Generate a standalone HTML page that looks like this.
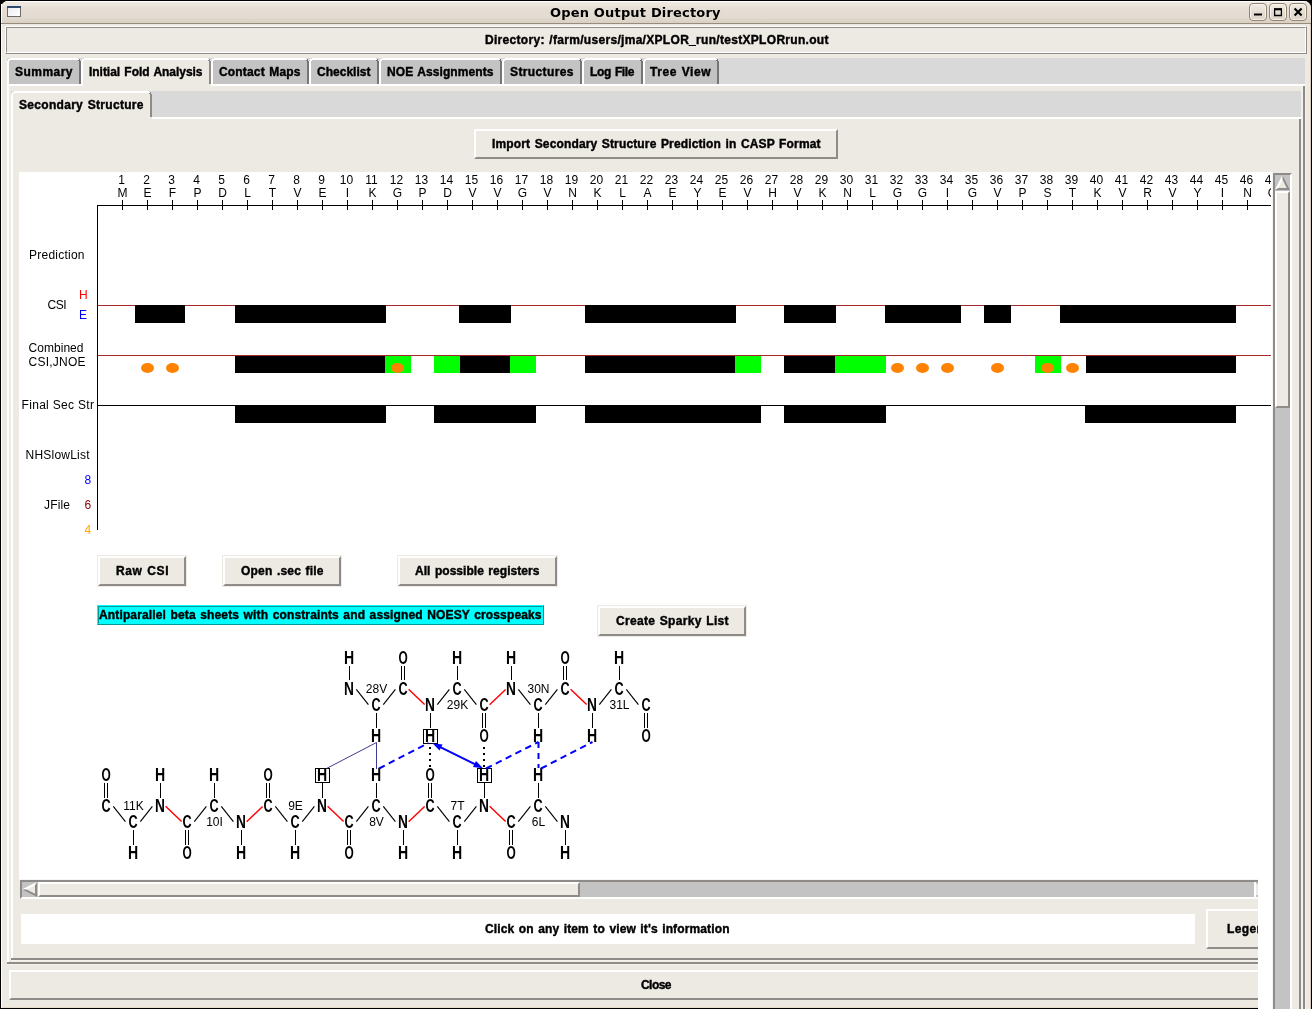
<!DOCTYPE html>
<html lang="en"><head><meta charset="utf-8"><title>Open Output Directory</title>
<style>
html,body{margin:0;padding:0;}
body{width:1312px;height:1009px;overflow:hidden;background:#ede9e3;position:relative;font:bold 12px 'Liberation Sans', sans-serif;}
div{position:absolute;box-sizing:content-box;}
#root{left:0;top:0;width:1312px;height:1009px;overflow:hidden;will-change:transform;}
.t{position:absolute;white-space:pre;display:block;color:#000;}
.fb{font:bold 12px/16px 'Liberation Sans',sans-serif;-webkit-text-stroke:0.4px #000;word-spacing:1px;}
.fr{font:12px/16px 'Liberation Sans',sans-serif;}
.ft{font:bold 13px/16px 'DejaVu Sans',sans-serif;}
svg text{font-weight:normal;}
svg .b text{font-weight:bold;}
svg{position:absolute;left:0;top:0;}
</style></head>
<body>
<div id="root">
<div class="winframe" style="left:0px;top:0px;width:1312px;height:1009px;background:#000;"></div><div style="left:1px;top:1px;width:1310px;height:1007px;background:#ede9e3;border-radius:7px 7px 0 0;"></div><div class="titlebar" style="left:1px;top:1px;width:1310px;height:23px;border-radius:7px 7px 0 0;background:linear-gradient(#ffffff 0,#ffffff 1px,#eeeae2 1px,#e6ded5 8px,#e3dad0 16px,#d9d1c5 22px,#998c7a 22px,#998c7a 23px);"></div><div style="left:1px;top:4px;width:1px;height:19px;background:#fff;"></div><div style="left:1px;top:24px;width:1px;height:984px;background:#fff;"></div><div style="left:7px;top:6px;width:12px;height:9px;border:1px solid #6b6b6b;background:linear-gradient(135deg,#ececec,#ffffff);"></div><div style="left:7px;top:6px;width:14px;height:2px;background:#2c4a6e;"></div><span class="t ft" style="left:550px;top:5px;letter-spacing:0.175px;">Open Output Directory</span><div style="left:1249px;top:3px;width:16px;height:16px;border:1px solid #93846f;border-radius:4px;box-shadow:inset 0 0 0 1px rgba(255,255,255,.65);background:linear-gradient(#efebe4,#e4dcd2 55%,#ddd5ca);"></div><div style="left:1269px;top:3px;width:16px;height:16px;border:1px solid #93846f;border-radius:4px;box-shadow:inset 0 0 0 1px rgba(255,255,255,.65);background:linear-gradient(#efebe4,#e4dcd2 55%,#ddd5ca);"></div><div style="left:1289px;top:3px;width:16px;height:16px;border:1px solid #93846f;border-radius:4px;box-shadow:inset 0 0 0 1px rgba(255,255,255,.65);background:linear-gradient(#efebe4,#e4dcd2 55%,#ddd5ca);"></div><svg width="1312" height="24" viewBox="0 0 1312 24"><g fill="none" stroke="#000"><path d="M1254 14.5h8" stroke-width="2"/><path d="M1274.6 9.5v6h6.8v-6" stroke-width="1.3"/><path d="M1274 9.2h8" stroke-width="2.2"/><path d="M1294.6 8.4l7 7.2M1301.6 8.4l-7 7.2" stroke-width="2.1"/></g></svg><div style="left:5px;top:26px;width:1300px;height:26px;border-style:solid;border-width:1px;border-color:#ffffff #8e8b88 #8e8b88 #ffffff;"></div><div style="left:6px;top:27px;width:1298px;height:24px;background:#ede9e3;border-style:solid;border-width:1px;border-color:#8e8b88 #ffffff #ffffff #8e8b88;"></div><span class="t fb" style="left:485px;top:32px;letter-spacing:0.303px;">Directory: /farm/users/jma/XPLOR_run/testXPLORrun.out</span><div style="left:7px;top:58px;width:1298px;height:26px;background:#d9d9d9;"></div><div style="left:7px;top:84px;width:1298px;height:2px;background:#ffffff;"></div><div style="left:7px;top:84px;width:2px;height:880px;background:#ffffff;"></div><div style="left:1303px;top:86px;width:2px;height:878px;background:#8e8b88;"></div><div style="left:7px;top:962px;width:1298px;height:2px;background:#8e8b88;"></div><div class="tab" style="left:7px;top:58px;width:74px;height:26px;background:#c3c3c3;"></div><div style="left:7px;top:60px;width:2px;height:24px;background:#ffffff;"></div><div style="left:9px;top:58px;width:70px;height:2px;background:#ffffff;"></div><div style="left:79px;top:60px;width:2px;height:24px;background:#757575;"></div><div style="left:7px;top:58px;width:3px;height:1px;background:#d9d9d9;"></div><div style="left:7px;top:59px;width:1px;height:2px;background:#d9d9d9;"></div><div style="left:8px;top:59px;width:1px;height:1px;background:#ffffff;"></div><div style="left:9px;top:60px;width:1px;height:1px;background:#ffffff;"></div><div style="left:78px;top:58px;width:3px;height:1px;background:#d9d9d9;"></div><div style="left:80px;top:59px;width:1px;height:2px;background:#d9d9d9;"></div><div style="left:79px;top:59px;width:1px;height:1px;background:#757575;"></div><div style="left:78px;top:60px;width:1px;height:1px;background:#757575;"></div><span class="t fb" style="left:15px;top:64px;letter-spacing:0.466px;">Summary</span><div class="tab active" style="left:81px;top:58px;width:130px;height:28px;background:#ede9e3;"></div><div style="left:81px;top:60px;width:2px;height:26px;background:#ffffff;"></div><div style="left:83px;top:58px;width:126px;height:2px;background:#ffffff;"></div><div style="left:209px;top:60px;width:2px;height:24px;background:#8e8b88;"></div><div style="left:81px;top:58px;width:3px;height:1px;background:#d9d9d9;"></div><div style="left:81px;top:59px;width:1px;height:2px;background:#d9d9d9;"></div><div style="left:82px;top:59px;width:1px;height:1px;background:#ffffff;"></div><div style="left:83px;top:60px;width:1px;height:1px;background:#ffffff;"></div><div style="left:208px;top:58px;width:3px;height:1px;background:#d9d9d9;"></div><div style="left:210px;top:59px;width:1px;height:2px;background:#d9d9d9;"></div><div style="left:209px;top:59px;width:1px;height:1px;background:#8e8b88;"></div><div style="left:208px;top:60px;width:1px;height:1px;background:#8e8b88;"></div><span class="t fb" style="left:89px;top:64px;letter-spacing:-0.037px;">Initial Fold Analysis</span><div class="tab" style="left:211px;top:58px;width:98px;height:26px;background:#c3c3c3;"></div><div style="left:211px;top:60px;width:2px;height:24px;background:#ffffff;"></div><div style="left:213px;top:58px;width:94px;height:2px;background:#ffffff;"></div><div style="left:307px;top:60px;width:2px;height:24px;background:#757575;"></div><div style="left:211px;top:58px;width:3px;height:1px;background:#d9d9d9;"></div><div style="left:211px;top:59px;width:1px;height:2px;background:#d9d9d9;"></div><div style="left:212px;top:59px;width:1px;height:1px;background:#ffffff;"></div><div style="left:213px;top:60px;width:1px;height:1px;background:#ffffff;"></div><div style="left:306px;top:58px;width:3px;height:1px;background:#d9d9d9;"></div><div style="left:308px;top:59px;width:1px;height:2px;background:#d9d9d9;"></div><div style="left:307px;top:59px;width:1px;height:1px;background:#757575;"></div><div style="left:306px;top:60px;width:1px;height:1px;background:#757575;"></div><span class="t fb" style="left:219px;top:64px;letter-spacing:0.165px;">Contact Maps</span><div class="tab" style="left:309px;top:58px;width:70px;height:26px;background:#c3c3c3;"></div><div style="left:309px;top:60px;width:2px;height:24px;background:#ffffff;"></div><div style="left:311px;top:58px;width:66px;height:2px;background:#ffffff;"></div><div style="left:377px;top:60px;width:2px;height:24px;background:#757575;"></div><div style="left:309px;top:58px;width:3px;height:1px;background:#d9d9d9;"></div><div style="left:309px;top:59px;width:1px;height:2px;background:#d9d9d9;"></div><div style="left:310px;top:59px;width:1px;height:1px;background:#ffffff;"></div><div style="left:311px;top:60px;width:1px;height:1px;background:#ffffff;"></div><div style="left:376px;top:58px;width:3px;height:1px;background:#d9d9d9;"></div><div style="left:378px;top:59px;width:1px;height:2px;background:#d9d9d9;"></div><div style="left:377px;top:59px;width:1px;height:1px;background:#757575;"></div><div style="left:376px;top:60px;width:1px;height:1px;background:#757575;"></div><span class="t fb" style="left:317px;top:64px;letter-spacing:0.018px;">Checklist</span><div class="tab" style="left:379px;top:58px;width:123px;height:26px;background:#c3c3c3;"></div><div style="left:379px;top:60px;width:2px;height:24px;background:#ffffff;"></div><div style="left:381px;top:58px;width:119px;height:2px;background:#ffffff;"></div><div style="left:500px;top:60px;width:2px;height:24px;background:#757575;"></div><div style="left:379px;top:58px;width:3px;height:1px;background:#d9d9d9;"></div><div style="left:379px;top:59px;width:1px;height:2px;background:#d9d9d9;"></div><div style="left:380px;top:59px;width:1px;height:1px;background:#ffffff;"></div><div style="left:381px;top:60px;width:1px;height:1px;background:#ffffff;"></div><div style="left:499px;top:58px;width:3px;height:1px;background:#d9d9d9;"></div><div style="left:501px;top:59px;width:1px;height:2px;background:#d9d9d9;"></div><div style="left:500px;top:59px;width:1px;height:1px;background:#757575;"></div><div style="left:499px;top:60px;width:1px;height:1px;background:#757575;"></div><span class="t fb" style="left:387px;top:64px;letter-spacing:0.089px;">NOE Assignments</span><div class="tab" style="left:502px;top:58px;width:80px;height:26px;background:#c3c3c3;"></div><div style="left:502px;top:60px;width:2px;height:24px;background:#ffffff;"></div><div style="left:504px;top:58px;width:76px;height:2px;background:#ffffff;"></div><div style="left:580px;top:60px;width:2px;height:24px;background:#757575;"></div><div style="left:502px;top:58px;width:3px;height:1px;background:#d9d9d9;"></div><div style="left:502px;top:59px;width:1px;height:2px;background:#d9d9d9;"></div><div style="left:503px;top:59px;width:1px;height:1px;background:#ffffff;"></div><div style="left:504px;top:60px;width:1px;height:1px;background:#ffffff;"></div><div style="left:579px;top:58px;width:3px;height:1px;background:#d9d9d9;"></div><div style="left:581px;top:59px;width:1px;height:2px;background:#d9d9d9;"></div><div style="left:580px;top:59px;width:1px;height:1px;background:#757575;"></div><div style="left:579px;top:60px;width:1px;height:1px;background:#757575;"></div><span class="t fb" style="left:510px;top:64px;letter-spacing:0.385px;">Structures</span><div class="tab" style="left:582px;top:58px;width:61px;height:26px;background:#c3c3c3;"></div><div style="left:582px;top:60px;width:2px;height:24px;background:#ffffff;"></div><div style="left:584px;top:58px;width:57px;height:2px;background:#ffffff;"></div><div style="left:641px;top:60px;width:2px;height:24px;background:#757575;"></div><div style="left:582px;top:58px;width:3px;height:1px;background:#d9d9d9;"></div><div style="left:582px;top:59px;width:1px;height:2px;background:#d9d9d9;"></div><div style="left:583px;top:59px;width:1px;height:1px;background:#ffffff;"></div><div style="left:584px;top:60px;width:1px;height:1px;background:#ffffff;"></div><div style="left:640px;top:58px;width:3px;height:1px;background:#d9d9d9;"></div><div style="left:642px;top:59px;width:1px;height:2px;background:#d9d9d9;"></div><div style="left:641px;top:59px;width:1px;height:1px;background:#757575;"></div><div style="left:640px;top:60px;width:1px;height:1px;background:#757575;"></div><span class="t fb" style="left:590px;top:64px;letter-spacing:-0.357px;">Log File</span><div class="tab" style="left:643px;top:58px;width:76px;height:26px;background:#c3c3c3;"></div><div style="left:643px;top:60px;width:2px;height:24px;background:#ffffff;"></div><div style="left:645px;top:58px;width:72px;height:2px;background:#ffffff;"></div><div style="left:717px;top:60px;width:2px;height:24px;background:#757575;"></div><div style="left:643px;top:58px;width:3px;height:1px;background:#d9d9d9;"></div><div style="left:643px;top:59px;width:1px;height:2px;background:#d9d9d9;"></div><div style="left:644px;top:59px;width:1px;height:1px;background:#ffffff;"></div><div style="left:645px;top:60px;width:1px;height:1px;background:#ffffff;"></div><div style="left:716px;top:58px;width:3px;height:1px;background:#d9d9d9;"></div><div style="left:718px;top:59px;width:1px;height:2px;background:#d9d9d9;"></div><div style="left:717px;top:59px;width:1px;height:1px;background:#757575;"></div><div style="left:716px;top:60px;width:1px;height:1px;background:#757575;"></div><span class="t fb" style="left:650px;top:64px;letter-spacing:0.543px;">Tree View</span><div style="left:11px;top:91px;width:1290px;height:26px;background:#d9d9d9;"></div><div style="left:11px;top:117px;width:1290px;height:2px;background:#ffffff;"></div><div style="left:11px;top:117px;width:2px;height:843px;background:#ffffff;"></div><div style="left:1299px;top:119px;width:2px;height:841px;background:#8e8b88;"></div><div style="left:1301px;top:86px;width:2px;height:876px;background:#f4f1eb;"></div><div style="left:11px;top:960px;width:1292px;height:2px;background:#f4f1eb;"></div><div style="left:7px;top:964px;width:1299px;height:1px;background:#f4f1eb;"></div><div style="left:1305px;top:86px;width:1px;height:879px;background:#f4f1eb;"></div><div style="left:11px;top:958px;width:1290px;height:2px;background:#8e8b88;"></div><div class="tab active" style="left:11px;top:91px;width:141px;height:28px;background:#ede9e3;"></div><div style="left:11px;top:93px;width:2px;height:26px;background:#ffffff;"></div><div style="left:13px;top:91px;width:137px;height:2px;background:#ffffff;"></div><div style="left:150px;top:93px;width:2px;height:24px;background:#8e8b88;"></div><div style="left:11px;top:91px;width:3px;height:1px;background:#d9d9d9;"></div><div style="left:11px;top:92px;width:1px;height:2px;background:#d9d9d9;"></div><div style="left:12px;top:92px;width:1px;height:1px;background:#ffffff;"></div><div style="left:13px;top:93px;width:1px;height:1px;background:#ffffff;"></div><div style="left:149px;top:91px;width:3px;height:1px;background:#d9d9d9;"></div><div style="left:151px;top:92px;width:1px;height:2px;background:#d9d9d9;"></div><div style="left:150px;top:92px;width:1px;height:1px;background:#8e8b88;"></div><div style="left:149px;top:93px;width:1px;height:1px;background:#8e8b88;"></div><span class="t fb" style="left:19px;top:97px;letter-spacing:0.303px;">Secondary Structure</span><div class="btn" style="left:474px;top:129px;width:360px;height:26px;background:#ede9e3;border-style:solid;border-width:2px;border-color:#ffffff #8e8b88 #8e8b88 #ffffff;"></div><span class="t fb" style="left:492px;top:136px;letter-spacing:0.144px;">Import Secondary Structure Prediction in CASP Format</span><div style="left:19px;top:172px;width:1254px;height:708px;background:#f7f5f3;"></div><div class="canvas" style="left:19px;top:172px;width:1253px;height:707px;background:#ffffff;"></div><div class="hscroll" style="left:20px;top:880px;width:1256px;height:15px;background:#c3c3c3;border-style:solid;border-width:2px;border-color:#8e8b88 #ffffff #ffffff #8e8b88;"></div><div class="slider" style="left:38px;top:882px;width:538px;height:11px;background:#ede9e3;border-style:solid;border-width:2px;border-color:#ffffff #8e8b88 #8e8b88 #ffffff;"></div><div style="left:1254px;top:882px;width:2px;height:15px;background:#ffffff;"></div><div style="left:1256px;top:884px;width:4px;height:11px;background:#ede9e3;"></div><svg width="1312" height="1009" viewBox="0 0 1312 1009"><polygon points="22,889.5 37,882 37,897" fill="#ede9e3"/><path d="M22 889.5 L37 882 L35 885.3 L26.6 889.5 Z" fill="#ffffff"/><path d="M37 882 L37 897 L22 889.5 L26.6 889.5 L35 893.7 L35 885.3 Z" fill="#8e8b88"/></svg><svg width="1312" height="1009" viewBox="0 0 1312 1009"><defs><clipPath id="cv"><rect x="19" y="172" width="1252" height="707"/></clipPath></defs><g clip-path="url(#cv)"><g shape-rendering="crispEdges" stroke-width="1" fill="none"><path d="M97.5 205v325 M97 205.5h1174" stroke="#000"/><path d="M122.5 200v10M147.5 200v10M172.5 200v10M197.5 200v10M222.5 200v10M247.5 200v10M272.5 200v10M297.5 200v10M322.5 200v10M347.5 200v10M372.5 200v10M397.5 200v10M422.5 200v10M447.5 200v10M472.5 200v10M497.5 200v10M522.5 200v10M547.5 200v10M572.5 200v10M597.5 200v10M622.5 200v10M647.5 200v10M672.5 200v10M697.5 200v10M722.5 200v10M747.5 200v10M772.5 200v10M797.5 200v10M822.5 200v10M847.5 200v10M872.5 200v10M897.5 200v10M922.5 200v10M947.5 200v10M972.5 200v10M997.5 200v10M1022.5 200v10M1047.5 200v10M1072.5 200v10M1097.5 200v10M1122.5 200v10M1147.5 200v10M1172.5 200v10M1197.5 200v10M1222.5 200v10M1247.5 200v10M1272.5 200v10" stroke="#000"/><path d="M98 305.5h1173 M98 355.5h1173" stroke="#a52a2a"/><path d="M98 405.5h1173" stroke="#000"/></g><g shape-rendering="crispEdges"><rect x="135" y="305" width="50" height="18" fill="#000"/><rect x="235" y="305" width="151" height="18" fill="#000"/><rect x="459" y="305" width="52" height="18" fill="#000"/><rect x="585" y="305" width="151" height="18" fill="#000"/><rect x="784" y="305" width="52" height="18" fill="#000"/><rect x="885" y="305" width="76" height="18" fill="#000"/><rect x="984" y="305" width="27" height="18" fill="#000"/><rect x="1060" y="305" width="176" height="18" fill="#000"/><rect x="235" y="355" width="150" height="18" fill="#000"/><rect x="385" y="355" width="26" height="18" fill="#00ff00"/><rect x="434" y="355" width="26" height="18" fill="#00ff00"/><rect x="460" y="355" width="50" height="18" fill="#000"/><rect x="510" y="355" width="26" height="18" fill="#00ff00"/><rect x="585" y="355" width="150" height="18" fill="#000"/><rect x="735" y="355" width="26" height="18" fill="#00ff00"/><rect x="784" y="355" width="51" height="18" fill="#000"/><rect x="835" y="355" width="51" height="18" fill="#00ff00"/><rect x="1035" y="355" width="26" height="18" fill="#00ff00"/><rect x="1086" y="355" width="150" height="18" fill="#000"/><rect x="235" y="405" width="151" height="18" fill="#000"/><rect x="434" y="405" width="102" height="18" fill="#000"/><rect x="585" y="405" width="176" height="18" fill="#000"/><rect x="784" y="405" width="102" height="18" fill="#000"/><rect x="1085" y="405" width="151" height="18" fill="#000"/><path d="M98 355.5h1173" stroke="#a52a2a" stroke-width="1" fill="none"/></g><ellipse cx="147.5" cy="368" rx="6.5" ry="5" fill="#ff8200"/><ellipse cx="172.5" cy="368" rx="6.5" ry="5" fill="#ff8200"/><ellipse cx="397.5" cy="368" rx="6.5" ry="5" fill="#ff8200"/><ellipse cx="897.5" cy="368" rx="6.5" ry="5" fill="#ff8200"/><ellipse cx="922.5" cy="368" rx="6.5" ry="5" fill="#ff8200"/><ellipse cx="947.5" cy="368" rx="6.5" ry="5" fill="#ff8200"/><ellipse cx="997.5" cy="368" rx="6.5" ry="5" fill="#ff8200"/><ellipse cx="1047.5" cy="368" rx="6.5" ry="5" fill="#ff8200"/><ellipse cx="1072.5" cy="368" rx="6.5" ry="5" fill="#ff8200"/><g font-family="Liberation Sans, sans-serif" font-size="12" fill="#000"><g text-anchor="middle"><text x="121.5" y="184">1</text><text x="122.5" y="197">M</text><text x="146.5" y="184">2</text><text x="147.5" y="197">E</text><text x="171.5" y="184">3</text><text x="172.5" y="197">F</text><text x="196.5" y="184">4</text><text x="197.5" y="197">P</text><text x="221.5" y="184">5</text><text x="222.5" y="197">D</text><text x="246.5" y="184">6</text><text x="247.5" y="197">L</text><text x="271.5" y="184">7</text><text x="272.5" y="197">T</text><text x="296.5" y="184">8</text><text x="297.5" y="197">V</text><text x="321.5" y="184">9</text><text x="322.5" y="197">E</text><text x="346.5" y="184">10</text><text x="347.5" y="197">I</text><text x="371.5" y="184">11</text><text x="372.5" y="197">K</text><text x="396.5" y="184">12</text><text x="397.5" y="197">G</text><text x="421.5" y="184">13</text><text x="422.5" y="197">P</text><text x="446.5" y="184">14</text><text x="447.5" y="197">D</text><text x="471.5" y="184">15</text><text x="472.5" y="197">V</text><text x="496.5" y="184">16</text><text x="497.5" y="197">V</text><text x="521.5" y="184">17</text><text x="522.5" y="197">G</text><text x="546.5" y="184">18</text><text x="547.5" y="197">V</text><text x="571.5" y="184">19</text><text x="572.5" y="197">N</text><text x="596.5" y="184">20</text><text x="597.5" y="197">K</text><text x="621.5" y="184">21</text><text x="622.5" y="197">L</text><text x="646.5" y="184">22</text><text x="647.5" y="197">A</text><text x="671.5" y="184">23</text><text x="672.5" y="197">E</text><text x="696.5" y="184">24</text><text x="697.5" y="197">Y</text><text x="721.5" y="184">25</text><text x="722.5" y="197">E</text><text x="746.5" y="184">26</text><text x="747.5" y="197">V</text><text x="771.5" y="184">27</text><text x="772.5" y="197">H</text><text x="796.5" y="184">28</text><text x="797.5" y="197">V</text><text x="821.5" y="184">29</text><text x="822.5" y="197">K</text><text x="846.5" y="184">30</text><text x="847.5" y="197">N</text><text x="871.5" y="184">31</text><text x="872.5" y="197">L</text><text x="896.5" y="184">32</text><text x="897.5" y="197">G</text><text x="921.5" y="184">33</text><text x="922.5" y="197">G</text><text x="946.5" y="184">34</text><text x="947.5" y="197">I</text><text x="971.5" y="184">35</text><text x="972.5" y="197">G</text><text x="996.5" y="184">36</text><text x="997.5" y="197">V</text><text x="1021.5" y="184">37</text><text x="1022.5" y="197">P</text><text x="1046.5" y="184">38</text><text x="1047.5" y="197">S</text><text x="1071.5" y="184">39</text><text x="1072.5" y="197">T</text><text x="1096.5" y="184">40</text><text x="1097.5" y="197">K</text><text x="1121.5" y="184">41</text><text x="1122.5" y="197">V</text><text x="1146.5" y="184">42</text><text x="1147.5" y="197">R</text><text x="1171.5" y="184">43</text><text x="1172.5" y="197">V</text><text x="1196.5" y="184">44</text><text x="1197.5" y="197">Y</text><text x="1221.5" y="184">45</text><text x="1222.5" y="197">I</text><text x="1246.5" y="184">46</text><text x="1247.5" y="197">N</text><text x="1271.5" y="184">47</text><text x="1272.5" y="197">Q</text></g><text x="29" y="259" textLength="55.5" lengthAdjust="spacing" fill="#000">Prediction</text><text x="79" y="299" textLength="7" lengthAdjust="spacing" fill="#ff0000">H</text><text x="47.5" y="309" textLength="19.0" lengthAdjust="spacing" fill="#000">CSI</text><text x="79" y="319" textLength="6.5" lengthAdjust="spacing" fill="#0000ff">E</text><text x="28.5" y="352" textLength="55.0" lengthAdjust="spacing" fill="#000">Combined</text><text x="28.5" y="366" textLength="57.0" lengthAdjust="spacing" fill="#000">CSI,JNOE</text><text x="21.5" y="409" textLength="72.5" lengthAdjust="spacing" fill="#000">Final Sec Str</text><text x="25.5" y="459" textLength="64.0" lengthAdjust="spacing" fill="#000">NHSlowList</text><text x="84.5" y="484" textLength="6.0" lengthAdjust="spacing" fill="#0000ff">8</text><text x="44" y="509" textLength="26" lengthAdjust="spacing" fill="#000">JFile</text><text x="84.5" y="509" textLength="6.0" lengthAdjust="spacing" fill="#8b0000">6</text><text x="84.5" y="534" textLength="6.0" lengthAdjust="spacing" fill="#ffa500">4</text></g></g></svg><div class="btn-ring" style="left:97px;top:555px;width:90px;height:32px;background:#ede9e3;"></div><div class="btn" style="left:98px;top:556px;width:84px;height:26px;background:#ede9e3;border-style:solid;border-width:2px;border-color:#ffffff #8e8b88 #8e8b88 #ffffff;"></div><span class="t fb" style="left:116px;top:563px;letter-spacing:0.581px;">Raw CSI</span><div class="btn-ring" style="left:222px;top:555px;width:120px;height:32px;background:#ede9e3;"></div><div class="btn" style="left:223px;top:556px;width:114px;height:26px;background:#ede9e3;border-style:solid;border-width:2px;border-color:#ffffff #8e8b88 #8e8b88 #ffffff;"></div><span class="t fb" style="left:241px;top:563px;letter-spacing:0.190px;">Open .sec file</span><div class="btn-ring" style="left:397px;top:555px;width:161px;height:32px;background:#ede9e3;"></div><div class="btn" style="left:398px;top:556px;width:155px;height:26px;background:#ede9e3;border-style:solid;border-width:2px;border-color:#ffffff #8e8b88 #8e8b88 #ffffff;"></div><span class="t fb" style="left:415px;top:563px;letter-spacing:0.053px;">All possible registers</span><div class="cyan" style="left:97px;top:605px;width:445px;height:18px;background:#00ffff;border-style:solid;border-width:1px;border-color:#00ffff #009999 #009999 #00ffff;"></div><div style="left:98px;top:606px;width:443px;height:16px;background:#00ffff;border-style:solid;border-width:1px;border-color:#009999 #00ffff #00ffff #009999;"></div><span class="t fb" style="left:99px;top:607px;letter-spacing:0.142px;">Antiparallel beta sheets with constraints and assigned NOESY crosspeaks</span><div class="btn-ring" style="left:597px;top:605px;width:150px;height:32px;background:#ede9e3;"></div><div class="btn" style="left:598px;top:606px;width:144px;height:26px;background:#ede9e3;border-style:solid;border-width:2px;border-color:#ffffff #8e8b88 #8e8b88 #ffffff;"></div><span class="t fb" style="left:616px;top:613px;letter-spacing:0.301px;">Create Sparky List</span><svg width="1312" height="1009" viewBox="0 0 1312 1009"><g clip-path="url(#cv)"><line x1="113.3" y1="806.4" x2="125.4" y2="821.6" stroke="#000" stroke-width="1.15"/><line x1="140.3" y1="821.6" x2="152.4" y2="806.4" stroke="#000" stroke-width="1.15"/><line x1="165.6" y1="806.3" x2="181.6" y2="821.5" stroke="#ff0000" stroke-width="1.45"/><line x1="194.3" y1="821.6" x2="206.4" y2="806.4" stroke="#000" stroke-width="1.15"/><line x1="221.3" y1="806.4" x2="233.4" y2="821.6" stroke="#000" stroke-width="1.15"/><line x1="246.6" y1="821.7" x2="262.6" y2="806.5" stroke="#ff0000" stroke-width="1.45"/><line x1="275.3" y1="806.4" x2="287.4" y2="821.6" stroke="#000" stroke-width="1.15"/><line x1="302.3" y1="821.6" x2="314.4" y2="806.4" stroke="#000" stroke-width="1.15"/><line x1="327.6" y1="806.3" x2="343.6" y2="821.5" stroke="#ff0000" stroke-width="1.45"/><line x1="356.3" y1="821.6" x2="368.4" y2="806.4" stroke="#000" stroke-width="1.15"/><line x1="383.3" y1="806.4" x2="395.4" y2="821.6" stroke="#000" stroke-width="1.15"/><line x1="408.6" y1="821.7" x2="424.6" y2="806.5" stroke="#ff0000" stroke-width="1.45"/><line x1="437.3" y1="806.4" x2="449.4" y2="821.6" stroke="#000" stroke-width="1.15"/><line x1="464.3" y1="821.6" x2="476.4" y2="806.4" stroke="#000" stroke-width="1.15"/><line x1="489.6" y1="806.3" x2="505.6" y2="821.5" stroke="#ff0000" stroke-width="1.45"/><line x1="518.3" y1="821.6" x2="530.4" y2="806.4" stroke="#000" stroke-width="1.15"/><line x1="545.3" y1="806.4" x2="557.4" y2="821.6" stroke="#000" stroke-width="1.15"/><line x1="356.3" y1="689.4" x2="368.4" y2="704.6" stroke="#000" stroke-width="1.15"/><line x1="383.3" y1="704.6" x2="395.4" y2="689.4" stroke="#000" stroke-width="1.15"/><line x1="408.6" y1="689.3" x2="424.6" y2="704.5" stroke="#ff0000" stroke-width="1.45"/><line x1="437.3" y1="704.6" x2="449.4" y2="689.4" stroke="#000" stroke-width="1.15"/><line x1="464.3" y1="689.4" x2="476.4" y2="704.6" stroke="#000" stroke-width="1.15"/><line x1="489.6" y1="704.7" x2="505.6" y2="689.5" stroke="#ff0000" stroke-width="1.45"/><line x1="518.3" y1="689.4" x2="530.4" y2="704.6" stroke="#000" stroke-width="1.15"/><line x1="545.3" y1="704.6" x2="557.4" y2="689.4" stroke="#000" stroke-width="1.15"/><line x1="570.6" y1="689.3" x2="586.6" y2="704.5" stroke="#ff0000" stroke-width="1.45"/><line x1="599.3" y1="704.6" x2="611.4" y2="689.4" stroke="#000" stroke-width="1.15"/><line x1="626.3" y1="689.4" x2="638.4" y2="704.6" stroke="#000" stroke-width="1.15"/><g shape-rendering="crispEdges" stroke="#000" stroke-width="1"><path d="M104.5 783V798M107.5 783V798"/><path d="M133.5 830V845"/><path d="M160.5 783V798"/><path d="M185.5 830V845M188.5 830V845"/><path d="M214.5 783V798"/><path d="M241.5 830V845"/><path d="M266.5 783V798M269.5 783V798"/><path d="M295.5 830V845"/><path d="M322.5 783V798"/><path d="M347.5 830V845M350.5 830V845"/><path d="M376.5 783V798"/><path d="M403.5 830V845"/><path d="M428.5 783V798M431.5 783V798"/><path d="M457.5 830V845"/><path d="M484.5 783V798"/><path d="M509.5 830V845M512.5 830V845"/><path d="M538.5 783V798"/><path d="M565.5 830V845"/><path d="M349.5 666V680"/><path d="M376.5 713V728"/><path d="M401.5 666V680M404.5 666V680"/><path d="M430.5 713V728"/><path d="M457.5 666V680"/><path d="M482.5 713V728M485.5 713V728"/><path d="M511.5 666V680"/><path d="M538.5 713V728"/><path d="M563.5 666V680M566.5 666V680"/><path d="M592.5 713V728"/><path d="M619.5 666V680"/><path d="M644.5 713V728M647.5 713V728"/></g><g class="b" font-family="Liberation Sans, sans-serif" font-weight="bold" font-size="18.2" text-anchor="middle" fill="#000"><text transform="translate(106 812) scale(0.696 1)">C</text><text transform="translate(106 781) scale(0.653 1)">O</text><text transform="translate(133 828) scale(0.696 1)">C</text><text transform="translate(133 859) scale(0.774 1)">H</text><text transform="translate(160 812) scale(0.754 1)">N</text><text transform="translate(160 781) scale(0.774 1)">H</text><text transform="translate(187 828) scale(0.696 1)">C</text><text transform="translate(187 859) scale(0.653 1)">O</text><text transform="translate(214 812) scale(0.696 1)">C</text><text transform="translate(214 781) scale(0.774 1)">H</text><text transform="translate(241 828) scale(0.754 1)">N</text><text transform="translate(241 859) scale(0.774 1)">H</text><text transform="translate(268 812) scale(0.696 1)">C</text><text transform="translate(268 781) scale(0.653 1)">O</text><text transform="translate(295 828) scale(0.696 1)">C</text><text transform="translate(295 859) scale(0.774 1)">H</text><text transform="translate(322 812) scale(0.754 1)">N</text><text transform="translate(322 781) scale(0.774 1)">H</text><text transform="translate(349 828) scale(0.696 1)">C</text><text transform="translate(349 859) scale(0.653 1)">O</text><text transform="translate(376 812) scale(0.696 1)">C</text><text transform="translate(376 781) scale(0.774 1)">H</text><text transform="translate(403 828) scale(0.754 1)">N</text><text transform="translate(403 859) scale(0.774 1)">H</text><text transform="translate(430 812) scale(0.696 1)">C</text><text transform="translate(430 781) scale(0.653 1)">O</text><text transform="translate(457 828) scale(0.696 1)">C</text><text transform="translate(457 859) scale(0.774 1)">H</text><text transform="translate(484 812) scale(0.754 1)">N</text><text transform="translate(484 781) scale(0.774 1)">H</text><text transform="translate(511 828) scale(0.696 1)">C</text><text transform="translate(511 859) scale(0.653 1)">O</text><text transform="translate(538 812) scale(0.696 1)">C</text><text transform="translate(538 781) scale(0.774 1)">H</text><text transform="translate(565 828) scale(0.754 1)">N</text><text transform="translate(565 859) scale(0.774 1)">H</text><text transform="translate(349 695) scale(0.754 1)">N</text><text transform="translate(349 664) scale(0.774 1)">H</text><text transform="translate(376 711) scale(0.696 1)">C</text><text transform="translate(376 742) scale(0.774 1)">H</text><text transform="translate(403 695) scale(0.696 1)">C</text><text transform="translate(403 664) scale(0.653 1)">O</text><text transform="translate(430 711) scale(0.754 1)">N</text><text transform="translate(430 742) scale(0.774 1)">H</text><text transform="translate(457 695) scale(0.696 1)">C</text><text transform="translate(457 664) scale(0.774 1)">H</text><text transform="translate(484 711) scale(0.696 1)">C</text><text transform="translate(484 742) scale(0.653 1)">O</text><text transform="translate(511 695) scale(0.754 1)">N</text><text transform="translate(511 664) scale(0.774 1)">H</text><text transform="translate(538 711) scale(0.696 1)">C</text><text transform="translate(538 742) scale(0.774 1)">H</text><text transform="translate(565 695) scale(0.696 1)">C</text><text transform="translate(565 664) scale(0.653 1)">O</text><text transform="translate(592 711) scale(0.754 1)">N</text><text transform="translate(592 742) scale(0.774 1)">H</text><text transform="translate(619 695) scale(0.696 1)">C</text><text transform="translate(619 664) scale(0.774 1)">H</text><text transform="translate(646 711) scale(0.696 1)">C</text><text transform="translate(646 742) scale(0.653 1)">O</text></g><g font-family="Liberation Sans, sans-serif" font-size="12" text-anchor="middle" fill="#000"><text x="133.5" y="810">11K</text><text x="214.5" y="826">10I</text><text x="295.5" y="810">9E</text><text x="376.5" y="826">8V</text><text x="457.5" y="810">7T</text><text x="538.5" y="826">6L</text><text x="376.5" y="693">28V</text><text x="457.5" y="709">29K</text><text x="538.5" y="693">30N</text><text x="619.5" y="709">31L</text></g><g shape-rendering="crispEdges" fill="none" stroke="#000" stroke-width="1"><rect x="315.5" y="768.5" width="14" height="14"/><rect x="477.5" y="768.5" width="14" height="14"/><rect x="423.5" y="729.5" width="14" height="14"/></g><path d="M326.5 768.5L376.5 742.5V769" fill="none" stroke="#3c3c96" stroke-width="1"/><g stroke="#0000ff" stroke-width="2" fill="none"><path d="M379 768.5L428.5 743" stroke-dasharray="6.5 4.5"/><path d="M486 768.5L538.5 742" stroke-dasharray="6.5 4.5"/><path d="M538.5 742V768" stroke-dasharray="6 5"/><path d="M541 768.5L592.5 742" stroke-dasharray="6.5 4.5"/><path d="M438.8 746.3L476.7 765.1"/></g><path d="M432.5 743.2L442.5 744.5L439.5 750.4Z M483 768.2L473 766.9L476 761Z" fill="#0000ff"/><path d="M430 747V767M484 747V767" stroke="#000" stroke-width="2" stroke-dasharray="2 4" fill="none" shape-rendering="crispEdges"/></g></svg><div class="info" style="left:21px;top:914px;width:1174px;height:30px;background:#fff;"></div><span class="t fb" style="left:485px;top:921px;letter-spacing:0.128px;">Click on any item to view it&#x27;s information</span><div class="btn" style="left:1206px;top:909px;width:76px;height:36px;background:#ede9e3;border-style:solid;border-width:2px;border-color:#ffffff #8e8b88 #8e8b88 #ffffff;"></div><span class="t fb" style="left:1227px;top:921px;letter-spacing:0.366px;">Legend</span><div class="btn" style="left:9px;top:970px;width:1291px;height:26px;background:#ede9e3;border-style:solid;border-width:2px;border-color:#ffffff #8e8b88 #8e8b88 #ffffff;"></div><span class="t fb" style="left:641px;top:977px;letter-spacing:-0.547px;">Close</span><div style="left:2px;top:1007px;width:1256px;height:1px;background:#e6dccd;"></div><div style="left:1258px;top:879px;width:14px;height:130px;background:#fff;"></div><div style="left:1272px;top:880px;width:1px;height:129px;background:#f7f5f3;"></div><div style="left:1292px;top:958px;width:19px;height:51px;background:#ede9e3;"></div><div style="left:1299px;top:958px;width:2px;height:51px;background:#8e8b88;"></div><div style="left:1301px;top:958px;width:2px;height:51px;background:#f4f1eb;"></div><div style="left:1305px;top:958px;width:1px;height:51px;background:#f4f1eb;"></div><div style="left:1303px;top:958px;width:2px;height:51px;background:#8e8b88;"></div><div style="left:1311px;top:0px;width:1px;height:1009px;background:#000;"></div><div style="left:1310px;top:24px;width:1px;height:985px;background:#d9ccba;"></div><div class="vscroll" style="left:1273px;top:173px;width:15px;height:856px;background:#c3c3c3;border-style:solid;border-width:2px;border-color:#8e8b88 #ffffff #ffffff #8e8b88;"></div><div class="slider" style="left:1275px;top:191px;width:11px;height:213px;background:#ede9e3;border-style:solid;border-width:2px;border-color:#ffffff #8e8b88 #8e8b88 #ffffff;"></div><svg width="1312" height="200" viewBox="0 0 1312 200"><polygon points="1282.5,175 1290,190 1275,190" fill="#ede9e3"/><path d="M1282.5 175 L1275 190 L1278.3 188 L1282.5 179.6 Z" fill="#ffffff"/><path d="M1282.5 175 L1290 190 L1275 190 L1278.3 188 L1286.7 188 L1282.5 179.6 Z" fill="#8e8b88"/></svg>
</div>
</body></html>
